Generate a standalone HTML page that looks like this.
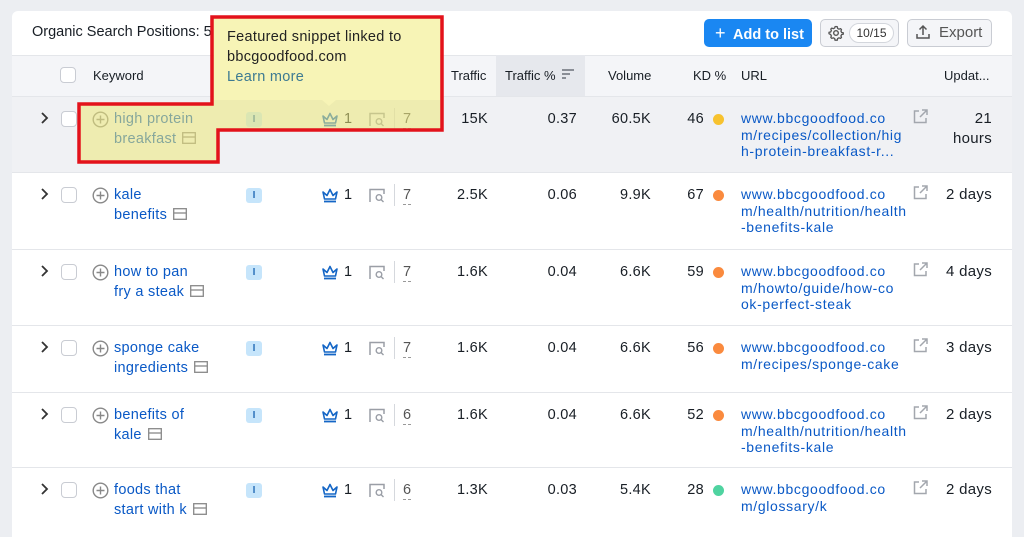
<!DOCTYPE html>
<html><head><meta charset="utf-8"><style>
*{margin:0;padding:0;box-sizing:border-box}
body{width:1024px;height:530px;background:#eceef2;font-family:"Liberation Sans",sans-serif;font-size:14px;color:#181e25;position:relative;overflow:hidden}
.card{position:absolute;left:12px;top:11px;width:1000px;height:516px;background:#fff;border-radius:6px}
.a{position:absolute;white-space:nowrap}
.row{position:absolute;left:12px;width:1000px;border-top:1px solid #e4e6ea;background:#fff}
.kw{color:#0a59c6;line-height:20px;font-size:14.5px;letter-spacing:0.3px}
.url{color:#0a59c6;line-height:16.5px;font-size:14px;letter-spacing:0.65px}
.r{text-align:right}
.num{font-size:14.5px;letter-spacing:0.3px}
.cb{position:absolute;width:16px;height:16px;border:1px solid #c9ccd3;border-radius:4px;background:#fff}
.badge{position:absolute;width:16px;height:15px;background:#c6e5fb;border-radius:3px;color:#2a6fb8;font-size:10px;text-align:center;line-height:15px;font-weight:bold}
.dot{position:absolute;width:11px;height:11px;border-radius:50%}
</style></head><body>
<div class="card"></div>
<div class="a" style="left:32px;top:24px;font-size:14.5px">Organic Search Positions: 5</div>
<div class="a" style="left:704px;top:19px;width:108px;height:28px;background:#1a87f2;border-radius:5px;color:#fff;font-weight:bold;font-size:14.5px;line-height:28px;padding-left:11px"><span style="font-size:18px;font-weight:normal">+</span>&nbsp; Add to list</div>
<div class="a" style="left:820px;top:19px;width:79px;height:28px;border:1px solid #c9ccd3;border-radius:5px;background:#f4f5f8"></div>
<svg class="a" style="left:828px;top:25px" width="16" height="16" viewBox="0 0 16 16"><circle cx="8" cy="8" r="2.3" fill="none" stroke="#555" stroke-width="1.4"/><path d="M8 1.5l1.3.3.3 1.6 1.4.8 1.5-.6 1 1-.6 1.5.8 1.4 1.6.3v1.4l-1.6.3-.8 1.4.6 1.5-1 1-1.5-.6-1.4.8-.3 1.6H7l-.3-1.6-1.4-.8-1.5.6-1-1 .6-1.5-.8-1.4L1 8.7V7.3l1.6-.3.8-1.4-.6-1.5 1-1 1.5.6 1.4-.8L7 1.8z" fill="none" stroke="#555" stroke-width="1.3" stroke-linejoin="round"/></svg>
<div class="a" style="left:849px;top:23px;width:45px;height:20px;border:1px solid #d3d6dc;border-radius:10px;background:#fff;font-size:12px;line-height:18px;text-align:center;color:#333">10/15</div>
<div class="a" style="left:907px;top:19px;width:85px;height:28px;border:1px solid #c9ccd3;border-radius:5px;background:#f4f5f8;color:#555;font-size:15px;line-height:26px;padding-left:31px">Export</div>
<svg class="a" style="left:915px;top:24px" width="16" height="16" viewBox="0 0 16 16" fill="none" stroke="#555" stroke-width="1.5"><path d="M8 11V2M4.5 5.5L8 2l3.5 3.5M2 10v4h12v-4"/></svg>
<div class="a" style="left:12px;top:55px;width:1000px;height:41px;background:#f4f5f8;border-top:1px solid #e4e6ea"></div>
<div class="a" style="left:496px;top:55px;width:89px;height:41px;background:#e6e8ed"></div>
<div class="cb" style="left:60px;top:67px"></div>
<div class="a" style="left:93px;top:68px;font-size:13px">Keyword</div>
<div class="a" style="left:451px;top:68px;font-size:13px">Traffic</div>
<div class="a" style="left:505px;top:68px;font-size:13px">Traffic %</div>
<svg class="a" style="left:562px;top:69px" width="13" height="11"><path d="M0 1h12M0 5h8M0 9h4" stroke="#6c717a" stroke-width="1.5"/></svg>
<div class="a" style="left:608px;top:68px;font-size:13px">Volume</div>
<div class="a" style="left:693px;top:68px;font-size:13px">KD %</div>
<div class="a" style="left:741px;top:68px;font-size:13px">URL</div>
<div class="a" style="left:944px;top:68px;font-size:13px">Updat...</div>

<div id="rows"></div>
<svg class="a" style="left:0;top:0" width="1024" height="530">
<polygon points="212,17 442,17 442,130 218,130 218,162 79,162 79,104 212,104" fill="rgba(236,232,120,0.55)" stroke="#e3121b" stroke-width="3.5"/>
<rect x="214" y="19" width="226" height="81" fill="#f7f4b6"/>
<polygon points="322,100 336,100 329,106" fill="#f7f4b6"/>
</svg>
<div class="a" style="left:227px;top:27px;font-size:14.5px;line-height:20px;color:#222;letter-spacing:0.3px">Featured snippet linked to<br>bbcgoodfood.com<br><span style="color:#3d7a92">Learn more</span></div>
<script>
var rows=[
[96,76,"high protein","breakfast","7","15K","0.37","60.5K","46","#f7c22e",["www.bbcgoodfood.co","m/recipes/collection/hig","h-protein-breakfast-r..."],"21<br>hours",true],
[172,77,"kale","benefits","7","2.5K","0.06","9.9K","67","#fa8a3e",["www.bbcgoodfood.co","m/health/nutrition/health","-benefits-kale"],"2 days"],
[249,76,"how to pan","fry a steak","7","1.6K","0.04","6.6K","59","#fa8a3e",["www.bbcgoodfood.co","m/howto/guide/how-co","ok-perfect-steak"],"4 days"],
[325,67,"sponge cake","ingredients","7","1.6K","0.04","6.6K","56","#fa8a3e",["www.bbcgoodfood.co","m/recipes/sponge-cake"],"3 days"],
[392,75,"benefits of","kale","6","1.6K","0.04","6.6K","52","#fa8a3e",["www.bbcgoodfood.co","m/health/nutrition/health","-benefits-kale"],"2 days"],
[467,70,"foods that","start with k","6","1.3K","0.03","5.4K","28","#4fd3a0",["www.bbcgoodfood.co","m/glossary/k"],"2 days"]];
var h="";
var ico='<svg style="display:inline-block;vertical-align:-1px;margin-left:6px" width="14" height="12"><rect x="0.7" y="0.7" width="12.6" height="10.6" fill="none" stroke="#888" stroke-width="1.3"/><path d="M1 5h12" stroke="#888" stroke-width="1.3"/></svg>';
rows.forEach(function(r){
var t=r[0],c=t+13,bg=r[12]?"#f0f1f4":"#fff";
h+='<div class="row" style="top:'+t+'px;height:'+r[1]+'px;background:'+bg+'"></div>';
h+='<svg class="a" style="left:40px;top:'+(c+3)+'px" width="9" height="12"><path d="M2 1l5 5-5 5" fill="none" stroke="#333" stroke-width="1.8"/></svg>';
h+='<div class="cb" style="left:61px;top:'+(c+2)+'px"></div>';
h+='<svg class="a" style="left:92px;top:'+(c+2)+'px" width="17" height="17"><circle cx="8.5" cy="8.5" r="7.3" fill="none" stroke="#888" stroke-width="1.4"/><path d="M8.5 4.5v8M4.5 8.5h8" stroke="#888" stroke-width="1.4"/></svg>';
h+='<div class="a kw" style="left:114px;top:'+(c)+'px">'+r[2]+'<br>'+r[3]+ico+'</div>';
h+='<div class="badge" style="left:246px;top:'+(c+3)+'px">I</div>';
h+='<svg class="a" style="left:321px;top:'+(c+2)+'px" width="18" height="16"><path d="M2 5l4 3.5L9 2.5l3 6 4-3.5-1.5 7h-11z" fill="none" stroke="#1466c6" stroke-width="1.6" stroke-linejoin="round"/><path d="M3 14.5h12" stroke="#1466c6" stroke-width="1.8"/></svg>';
h+='<div class="a num" style="left:344px;top:'+(c+1)+'px;line-height:18px">1</div>';
h+='<svg class="a" style="left:369px;top:'+(c+3)+'px" width="17" height="15"><path d="M1 14V1.5h14V6" fill="none" stroke="#9a9ea6" stroke-width="1.5"/><circle cx="10" cy="9.5" r="2.8" fill="none" stroke="#9a9ea6" stroke-width="1.4"/><path d="M12 11.5l2.5 2.5" stroke="#9a9ea6" stroke-width="1.4"/></svg>';
h+='<div class="a" style="left:394px;top:'+(c-1)+'px;width:1px;height:22px;background:#d5d8dd"></div>';
h+='<div class="a num" style="left:403px;top:'+(c+1)+'px;line-height:18px;color:#555;border-bottom:1px dashed #999">'+r[4]+'</div>';
h+='<div class="a r num" style="left:400px;width:88px;top:'+(c+1)+'px;line-height:18px">'+r[5]+'</div>';
h+='<div class="a r num" style="left:490px;width:87px;top:'+(c+1)+'px;line-height:18px">'+r[6]+'</div>';
h+='<div class="a r num" style="left:580px;width:71px;top:'+(c+1)+'px;line-height:18px">'+r[7]+'</div>';
h+='<div class="a r num" style="left:660px;width:44px;top:'+(c+1)+'px;line-height:18px">'+r[8]+'</div>';
h+='<div class="dot" style="left:713px;top:'+(c+5)+'px;background:'+r[9]+'"></div>';
h+='<div class="a url" style="left:741px;top:'+(c+1)+'px">'+r[10].join('<br>')+'</div>';
h+='<svg class="a" style="left:913px;top:'+(c)+'px" width="15" height="15"><path d="M6 2H1.5v11.5H13V9" fill="none" stroke="#a3a7ae" stroke-width="1.5"/><path d="M7 8l6.5-6.5M9 1h5v5" fill="none" stroke="#a3a7ae" stroke-width="1.5"/></svg>';
h+='<div class="a r num" style="left:900px;width:92px;top:'+(c)+'px;line-height:20px;font-size:15px">'+r[11]+'</div>';
});
document.getElementById('rows').innerHTML=h;
</script>
</body></html>
